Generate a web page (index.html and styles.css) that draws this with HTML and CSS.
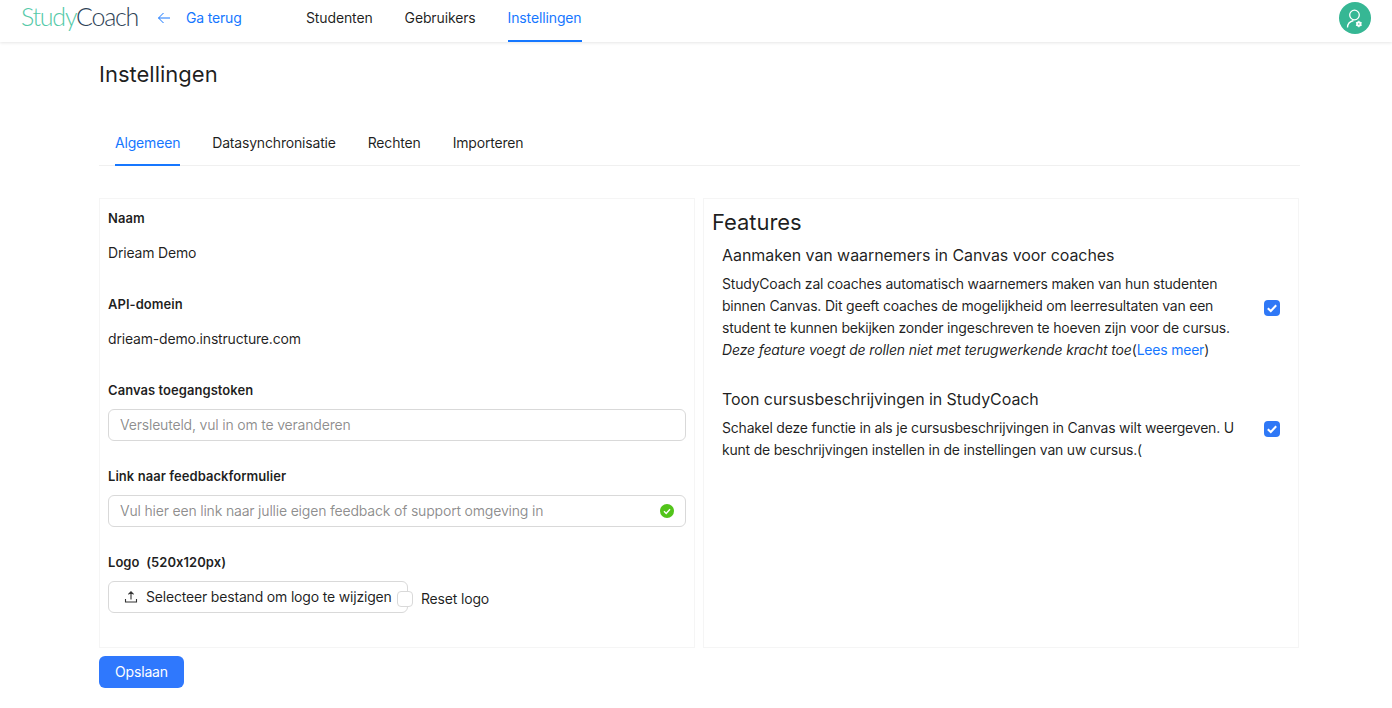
FILE: index.html
```html
<!DOCTYPE html>
<html lang="nl">
<head>
  <meta charset="UTF-8">
  <title>StudyCoach - Instellingen</title>
  <link rel="stylesheet" href="styles.css">
</head>
<body>
  <header class="topbar">
    <div class="logo"><span class="logo-study">Study</span><span class="logo-coach">Coach</span></div>
    <a class="back-link">
      <svg class="back-icon" viewBox="0 0 14 14" width="14" height="14" fill="none" stroke="#1677ff" stroke-width="1">
        <path d="M13 7H1.5M6.5 2 1.5 7l5 5"/>
      </svg>
      <span>Ga terug</span>
    </a>
    <nav class="topnav">
      <a class="topnav-item">Studenten</a>
      <a class="topnav-item">Gebruikers</a>
      <a class="topnav-item active">Instellingen</a>
    </nav>
    <div class="avatar">
      <svg viewBox="0 0 22 22" width="22" height="22" fill="none" stroke="#fff" stroke-width="1.3">
        <circle cx="10.5" cy="8" r="4.8"/>
        <path d="M3.5 20.5c0-3.4 2.3-6 6-7"/>
        <circle cx="14.8" cy="17" r="1.7" stroke-width="1.9"/>
        <path d="M14.8 13.8v1M14.8 19.2v1M12 15.4l.9.5M16.7 18.1l.9.5M12 18.6l.9-.5M16.7 15.9l.9-.5" stroke-width="1.2"/>
      </svg>
    </div>
  </header>

  <main class="page">
    <h1 class="page-title">Instellingen</h1>

    <div class="tabs">
      <a class="tab active">Algemeen</a>
      <a class="tab">Datasynchronisatie</a>
      <a class="tab">Rechten</a>
      <a class="tab">Importeren</a>
    </div>

    <div class="panels">
      <section class="panel panel-form">
        <div class="field">
          <div class="field-label">Naam</div>
          <div class="field-value">Drieam Demo</div>
        </div>
        <div class="field">
          <div class="field-label">API-domein</div>
          <div class="field-value">drieam-demo.instructure.com</div>
        </div>
        <div class="field">
          <div class="field-label">Canvas toegangstoken</div>
          <div class="input-box"><input class="input" placeholder="Versleuteld, vul in om te veranderen"></div>
        </div>
        <div class="field">
          <div class="field-label">Link naar feedbackformulier</div>
          <div class="input-box">
            <input class="input" placeholder="Vul hier een link naar jullie eigen feedback of support omgeving in">
            <svg class="input-ok" viewBox="0 0 14 14" width="14" height="14">
              <circle cx="7" cy="7" r="7" fill="#52c41a"/>
              <path d="M4 7.2 6.2 9.4 10 5.2" fill="none" stroke="#fff" stroke-width="1.4"/>
            </svg>
          </div>
        </div>
        <div class="field field-logo">
          <div class="field-label">Logo&nbsp; (520x120px)</div>
          <div class="upload-row">
            <button class="upload-btn">
              <svg viewBox="0 0 14 14" width="14" height="14" fill="none" stroke="#333" stroke-width="1.1">
                <path d="M7 9.5V2M4.4 4.4 7 1.8l2.6 2.6M1.5 9v3h11V9"/>
              </svg>
              <span>Selecteer bestand om logo te wijzigen</span>
            </button>
            <span class="checkbox"></span>
            <span class="reset-label">Reset logo</span>
          </div>
        </div>
      </section>

      <section class="panel panel-features">
        <h2 class="features-title">Features</h2>
        <div class="feature">
          <h3 class="feature-title">Aanmaken van waarnemers in Canvas voor coaches</h3>
          <div class="feature-row">
            <p class="feature-text">StudyCoach zal coaches automatisch waarnemers maken van hun studenten binnen Canvas. Dit geeft coaches de mogelijkheid om leerresultaten van een student te kunnen bekijken zonder ingeschreven te hoeven zijn voor de cursus. <em>Deze feature voegt de rollen niet met terugwerkende kracht toe</em>(<a class="link">Lees meer</a>)</p>
            <span class="checkbox checked">
              <svg viewBox="0 0 16 16" width="16" height="16" fill="none" stroke="#fff" stroke-width="2"><path d="M3.8 8.2 6.8 11l5.4-5.8"/></svg>
            </span>
          </div>
        </div>
        <div class="feature">
          <h3 class="feature-title">Toon cursusbeschrijvingen in StudyCoach</h3>
          <div class="feature-row">
            <p class="feature-text">Schakel deze functie in als je cursusbeschrijvingen in Canvas wilt weergeven. U kunt de beschrijvingen instellen in de instellingen van uw cursus.(</p>
            <span class="checkbox checked">
              <svg viewBox="0 0 16 16" width="16" height="16" fill="none" stroke="#fff" stroke-width="2"><path d="M3.8 8.2 6.8 11l5.4-5.8"/></svg>
            </span>
          </div>
        </div>
      </section>
    </div>

    <button class="save-btn">Opslaan</button>
  </main>
</body>
</html>
```

FILE: styles.css
```css
* { box-sizing: border-box; }
html, body { height: 100%; }
body {
  margin: 0;
  background: #fff;
  color: rgba(0,0,0,0.88);
  font-family: Inter, "Liberation Sans", sans-serif;
  font-size: 14px;
  line-height: 22px;
  letter-spacing: -0.18px;
  font-feature-settings: "calt" 0;
  overflow: hidden;
}

/* top bar */
.topbar {
  display: flex;
  align-items: center;
  height: 42px;
  padding-left: 21px;
  background: #fff;
  box-shadow: 0 1px 3px rgba(0,0,0,0.1);
}
.logo {
  width: 136px;
  margin-bottom: 11px;
  font-family: Lato, sans-serif;
  font-weight: 300;
  font-size: 25px;
  line-height: 32px;
  letter-spacing: -1.25px;
}
.logo-study { color: #54c9a8; }
.logo-coach { color: #2f4358; }
.back-link {
  display: flex;
  align-items: center;
  gap: 15px;
  width: 149px;
  margin-bottom: 6px;
  color: #1677ff;
}
.topnav {
  display: flex;
  gap: 32px;
  height: 42px;
  letter-spacing: -0.13px;
}
.topnav-item {
  line-height: 36px;
  color: rgba(0,0,0,0.88);
}
.topnav-item.active {
  color: #1677ff;
  border-bottom: 2px solid #1677ff;
}
.avatar {
  display: flex;
  align-items: center;
  justify-content: center;
  width: 32px;
  height: 32px;
  margin-left: auto;
  margin-right: 21px;
  margin-bottom: 6px;
  border-radius: 50%;
  background: #36b794;
}

/* page */
.page { padding: 0 92px 0 99px; }
.page-title {
  margin: 0;
  padding-top: 16px;
  font-size: 22px;
  font-weight: 400;
  line-height: 32px;
  letter-spacing: 0;
}
.tabs {
  display: flex;
  gap: 32px;
  height: 44px;
  margin-top: 32px;
  padding-left: 16px;
  border-bottom: 1px solid #f0f0f0;
}
.tab { line-height: 32px; padding-top: 5px; height: 44px; }
.tab.active {
  color: #1677ff;
  border-bottom: 2px solid #1677ff;
}

.panels {
  display: flex;
  gap: 8px;
  width: 1200px;
  margin-top: 32px;
}
.panel {
  flex: 1;
  height: 450px;
  border: 1px solid #f5f5f5;
}

/* left form */
.panel-form { padding: 8px; }
.field { height: 86px; }
.field-label {
  font-size: 13px;
  font-weight: 600;
  height: 22px;
  letter-spacing: 0.05px;
}
.field-value { margin-top: 13px; }
.input-box {
  position: relative;
  margin-top: 8px;
}
.input {
  display: block;
  width: 100%;
  height: 32px;
  padding: 0 11px 2px;
  border: 1px solid #d9d9d9;
  border-radius: 6px;
  font: inherit;
  letter-spacing: -0.2px;
  outline: none;
}
.input::placeholder { color: rgba(0,0,0,0.45); }
.input-ok {
  position: absolute;
  right: 12px;
  top: 9px;
}
.upload-row {
  display: flex;
  align-items: center;
  margin-top: 8px;
}
.upload-btn {
  display: flex;
  align-items: center;
  gap: 8px;
  flex-shrink: 0;
  width: 300px;
  height: 32px;
  padding: 0 15px;
  border: 1px solid #d9d9d9;
  border-radius: 6px;
  background: #fff;
  color: rgba(0,0,0,0.88);
  font: inherit;
  letter-spacing: inherit;
  white-space: nowrap;
}
.upload-btn svg { flex-shrink: 0; }
.checkbox {
  display: block;
  flex-shrink: 0;
  width: 16px;
  height: 16px;
  border: 1px solid #d9d9d9;
  border-radius: 4px;
  background: #fff;
}
.upload-row .checkbox {
  margin: 4px 0 0 -11px;
  position: relative;
}
.reset-label { margin: 4px 0 0 8px; }

/* right features */
.panel-features { padding: 8px; }
.features-title {
  margin: 0;
  font-size: 22px;
  font-weight: 400;
  line-height: 30px;
  letter-spacing: -0.05px;
}
.feature { padding: 0 10px; }
.feature-title {
  margin: 5px 0 0;
  font-size: 16px;
  font-weight: 400;
  line-height: 26px;
  letter-spacing: -0.07px;
}
.feature + .feature { margin-top: 25px; }
.feature-row {
  display: flex;
  align-items: center;
  justify-content: space-between;
  margin-top: 5px;
}
.feature-text {
  width: 515px;
  margin: 0;
  letter-spacing: -0.21px;
}
.feature-text em { letter-spacing: -0.15px; }
.feature-row .checkbox { margin-bottom: 19px; }
.feature + .feature .checkbox { margin-bottom: 21px; }
.checkbox.checked {
  border: 0;
  background: #2f78f6;
}
.checkbox.checked svg { display: block; }
.link { color: #1677ff; }

.save-btn {
  display: block;
  width: 85px;
  height: 32px;
  margin-top: 8px;
  border: 0;
  border-radius: 6px;
  background: #2f78fd;
  color: #fff;
  font: inherit;
  letter-spacing: inherit;
}
```
